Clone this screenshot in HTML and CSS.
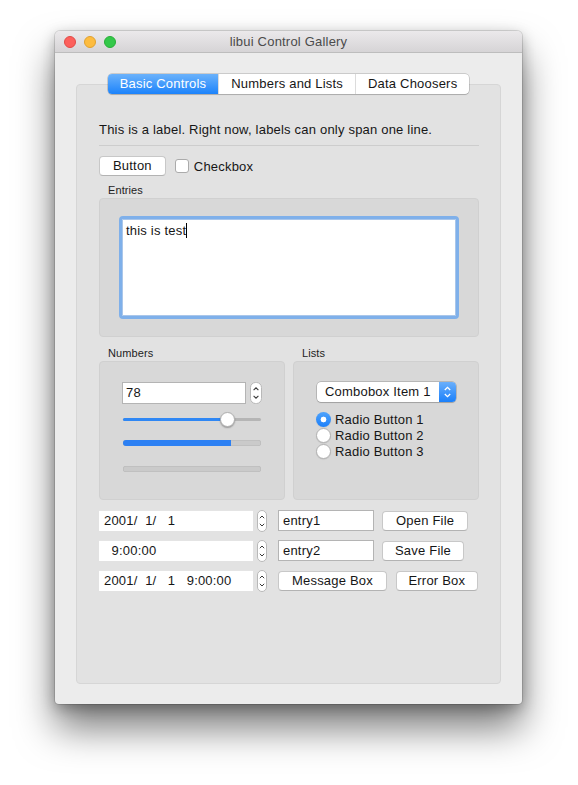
FILE: index.html
```html
<!DOCTYPE html>
<html>
<head>
<meta charset="utf-8">
<title>libui Control Gallery</title>
<link rel="stylesheet" href="styles.css">
</head>
<body>
<div class="window">
  <div class="titlebar">
    <div class="lights">
      <span class="light red"></span>
      <span class="light yellow"></span>
      <span class="light green"></span>
    </div>
    <div class="title">libui Control Gallery</div>
    <div></div>
  </div>
  <div class="content">
    <div class="tabs">
      <div class="tab active">Basic Controls</div>
      <div class="tab">Numbers and Lists</div>
      <div class="tab">Data Choosers</div>
    </div>
    <div class="panel">
      <div class="label">This is a label. Right now, labels can only span one line.</div>
      <div class="sep"></div>
      <div class="btnrow">
        <button class="btn">Button</button>
        <div class="check"><span class="box"></span><span>Checkbox</span></div>
      </div>
      <div class="group-title first">Entries</div>
      <div class="group entries">
        <div class="textarea"><span class="typed">this is test</span></div>
      </div>
      <div class="two">
        <div class="col">
          <div class="group-title">Numbers</div>
          <div class="group numbers">
            <div class="spin">
              <div class="num-entry">78</div>
              <svg class="stepper" width="12" height="22" viewBox="0 0 12 22"><rect x="0.5" y="0.5" width="11" height="21" rx="5" fill="#fff" stroke="#b8b8b8"/><path d="M3.6 8.2 L6 5.8 L8.4 8.2" fill="none" stroke="#3a3a3a" stroke-width="1.1"/><path d="M3.6 13.8 L6 16.2 L8.4 13.8" fill="none" stroke="#3a3a3a" stroke-width="1.1"/></svg>
            </div>
            <div class="slider">
              <div class="track"><div class="track-fill" style="width:76%"></div></div>
              <div class="thumb"></div>
            </div>
            <div class="progress"><div class="progress-fill" style="width:78%"></div></div>
            <div class="progress second"></div>
          </div>
        </div>
        <div class="col">
          <div class="group-title">Lists</div>
          <div class="group lists">
            <div class="combo">
              <span class="combo-text">Combobox Item 1</span>
              <span class="combo-arrows"><svg width="17" height="20" viewBox="0 0 17 20"><path d="M5.8 8 L8.5 5.3 L11.2 8" fill="none" stroke="#fff" stroke-width="1.3"/><path d="M5.8 12 L8.5 14.7 L11.2 12" fill="none" stroke="#fff" stroke-width="1.3"/></svg></span>
            </div>
            <div class="radios">
              <div class="radio-row"><span class="radio on"></span>Radio Button 1</div>
              <div class="radio-row"><span class="radio"></span>Radio Button 2</div>
              <div class="radio-row"><span class="radio"></span>Radio Button 3</div>
            </div>
          </div>
        </div>
      </div>
      <div class="choosers">
        <div class="crow">
          <div class="date">2001/  1/   1</div>
          <svg class="dstep" width="10" height="22" viewBox="0 0 10 22"><rect x="0.5" y="0.5" width="9" height="21" rx="4.5" fill="#fff" stroke="#b8b8b8"/><path d="M2.8 8.2 L5 6 L7.2 8.2" fill="none" stroke="#3a3a3a" stroke-width="1"/><path d="M2.8 13.8 L5 16 L7.2 13.8" fill="none" stroke="#3a3a3a" stroke-width="1"/></svg>
          <div class="entry">entry1</div>
          <button class="btn">Open File</button>
        </div>
        <div class="crow">
          <div class="date">  9:00:00</div>
          <svg class="dstep" width="10" height="22" viewBox="0 0 10 22"><rect x="0.5" y="0.5" width="9" height="21" rx="4.5" fill="#fff" stroke="#b8b8b8"/><path d="M2.8 8.2 L5 6 L7.2 8.2" fill="none" stroke="#3a3a3a" stroke-width="1"/><path d="M2.8 13.8 L5 16 L7.2 13.8" fill="none" stroke="#3a3a3a" stroke-width="1"/></svg>
          <div class="entry">entry2</div>
          <button class="btn tight">Save File</button>
        </div>
        <div class="crow">
          <div class="date">2001/  1/   1   9:00:00</div>
          <svg class="dstep" width="10" height="22" viewBox="0 0 10 22"><rect x="0.5" y="0.5" width="9" height="21" rx="4.5" fill="#fff" stroke="#b8b8b8"/><path d="M2.8 8.2 L5 6 L7.2 8.2" fill="none" stroke="#3a3a3a" stroke-width="1"/><path d="M2.8 13.8 L5 16 L7.2 13.8" fill="none" stroke="#3a3a3a" stroke-width="1"/></svg>
          <div class="btnpair">
            <button class="btn">Message Box</button>
            <button class="btn tighter">Error Box</button>
          </div>
        </div>
      </div>
    </div>
  </div>
</div>
</body>
</html>
```

FILE: styles.css
```css
* { box-sizing: border-box; }

html, body { min-height: 785px; }

body {
  margin: 0;
  padding: 31px 0 81px 55px;
  background: #ffffff;
  font-family: "Liberation Sans", Arial, sans-serif;
  font-size: 13px;
  letter-spacing: 0.2px;
  color: #161616;
}

.window {
  width: 467px;
  height: 673px;
  background: #ececec;
  border-radius: 5px 5px 4px 4px;
  overflow: hidden;
  display: flex;
  flex-direction: column;
  box-shadow: 0 24px 38px rgba(0, 0, 0, 0.52), 0 0 0 1px rgba(0, 0, 0, 0.12), 0 4px 14px rgba(0, 0, 0, 0.28);
}

.titlebar {
  height: 22px;
  flex: none;
  display: grid;
  grid-template-columns: 1fr auto 1fr;
  align-items: center;
  background: linear-gradient(#ebe9eb, #d6d4d6);
  border-bottom: 1px solid #bdbdbd;
}

.lights {
  display: flex;
  gap: 8px;
  padding-left: 9px;
}

.light {
  width: 12px;
  height: 12px;
  border-radius: 50%;
}
.red { background: #fc605c; border: 1px solid #e14a46; }
.yellow { background: #fdbc40; border: 1px solid #e0a12f; }
.green { background: #34c84a; border: 1px solid #28ae37; }

.title {
  color: #4b4b4b;
  line-height: 16px;
}

.content {
  flex: 1;
  display: flex;
  flex-direction: column;
  padding: 21px 21px 20px;
}

.tabs {
  align-self: center;
  display: flex;
  height: 20px;
  margin-bottom: -10px;
  position: relative;
  z-index: 1;
  background: #fff;
  border-radius: 4px;
  box-shadow: 0 0 0 0.5px rgba(0, 0, 0, 0.28), 0 1px 1px rgba(0, 0, 0, 0.12);
}

.tab {
  padding: 0 12px;
  line-height: 20px;
  border-left: 1px solid #dcdcdc;
  color: #161616;
  white-space: nowrap;
}
.tab:first-child { border-left: none; }
.tab.active {
  background: linear-gradient(#6bb2fb, #1c83fb);
  color: #fff;
  border-radius: 4px 0 0 4px;
}

.panel {
  flex: 1;
  background: #e2e2e2;
  border: 1px solid #d6d6d6;
  border-radius: 4px;
  padding: 37px 21px 0 22px;
}

.label { line-height: 16px; }

.sep {
  margin-top: 7px;
  height: 1px;
  background: #cdcdcd;
}

.btnrow {
  display: flex;
  align-items: center;
  gap: 9px;
  margin-top: 10px;
}

.btn {
  flex: none;
  height: 20px;
  padding: 0 13px;
  background: #fff;
  border: 1px solid #c8c8c8;
  border-bottom-color: #b3b3b3;
  border-radius: 4px;
  font: inherit;
  letter-spacing: inherit;
  line-height: 18px;
  color: #161616;
  white-space: nowrap;
}
.btn.tight { padding: 0 12px; }
.btn.tighter { padding: 0 11.5px; }

.check {
  display: flex;
  align-items: center;
  gap: 5px;
}
.box {
  width: 14px;
  height: 14px;
  background: #fff;
  border: 1px solid #ababab;
  border-radius: 3px;
}

.group-title {
  font-size: 11px;
  letter-spacing: 0.1px;
  line-height: 13px;
  margin: 10px 0 1px 9px;
  color: #222;
}
.group-title.first { margin-top: 8px; }

.group {
  background: #d8d8d8;
  border: 1px solid #d0d0d0;
  border-radius: 4px;
}

.entries {
  height: 139px;
  padding: 17px 19px;
}

.textarea {
  height: 103px;
  background: #fff;
  border: 3px solid #7fb0ea;
  border-radius: 4px;
  box-shadow: inset 0 0 0 1px #a9c6ea;
  padding: 3px 4px;
  line-height: 17px;
}
.typed { border-right: 1px solid #000; }

.two {
  display: grid;
  grid-template-columns: 1fr 1fr;
  gap: 8px;
}

.numbers {
  height: 139px;
  padding: 20px 22px 0;
}

.spin {
  display: flex;
  align-items: center;
  gap: 4px;
}
.num-entry {
  width: 124px;
  height: 22px;
  background: #fff;
  border: 1px solid #b4b4b4;
  padding-left: 3px;
  line-height: 20px;
}
.stepper { display: block; }

.slider {
  position: relative;
  height: 15px;
  margin-top: 8px;
  display: flex;
  align-items: center;
  padding: 0 1px;
}
.track {
  flex: 1;
  height: 3px;
  border-radius: 2px;
  background: #b5b5b5;
}
.track-fill {
  height: 100%;
  border-radius: 2px;
  background: #2f87f4;
}
.thumb {
  position: absolute;
  left: 98px;
  top: 0;
  width: 15px;
  height: 15px;
  border-radius: 50%;
  background: #fff;
  border: 0.5px solid #b0b0b0;
  box-shadow: 0 1px 1.5px rgba(0, 0, 0, 0.3);
}

.progress {
  height: 6px;
  margin: 13px 1px 0;
  border-radius: 3px;
  background: #cacaca;
  box-shadow: inset 0 0 0 0.5px #b5b5b5;
  overflow: hidden;
}
.progress.second { margin-top: 20px; }
.progress-fill {
  height: 100%;
  background: #2c80f3;
}

.lists {
  height: 139px;
  padding: 20px 22px 0 23px;
}

.combo {
  display: flex;
  width: 139px;
  height: 20px;
  background: #fff;
  border-radius: 4px;
  box-shadow: 0 0 0 0.5px rgba(0, 0, 0, 0.3), 0 1px 1px rgba(0, 0, 0, 0.12);
  overflow: hidden;
}
.combo-text {
  flex: 1;
  padding-left: 8px;
  line-height: 20px;
  white-space: nowrap;
}
.combo-arrows {
  width: 17px;
  background: linear-gradient(#6aaffb, #1b80fa);
  display: flex;
}

.radios { margin-top: 9px; margin-left: -1px; }
.radio-row {
  display: flex;
  align-items: center;
  gap: 4px;
  height: 16px;
}
.radio {
  width: 15px;
  height: 15px;
  border-radius: 50%;
  background: #fff;
  border: 1px solid #b2b2b2;
  box-shadow: 0 0.5px 1px rgba(0, 0, 0, 0.12);
}
.radio.on {
  border: none;
  background: radial-gradient(circle, #fff 0 2.6px, transparent 3.2px), linear-gradient(#4fa3fb, #1b7ffa);
}

.choosers {
  margin-top: 10px;
  display: flex;
  flex-direction: column;
  gap: 9px;
}
.crow {
  display: flex;
  align-items: center;
  height: 21px;
}
.date {
  flex: none;
  width: 154px;
  height: 21px;
  background: #fff;
  border-top: 1px solid #e4e4e4;
  padding-left: 5px;
  line-height: 20px;
  white-space: pre;
}
.dstep {
  flex: none;
  display: block;
  margin-left: 4px;
  margin-right: 11px;
}
.entry {
  flex: none;
  width: 96px;
  height: 21px;
  background: #fff;
  border: 1px solid #b4b4b4;
  padding-left: 4px;
  line-height: 19px;
  margin-right: 8px;
}
.btnpair {
  display: flex;
  gap: 9px;
}
```
